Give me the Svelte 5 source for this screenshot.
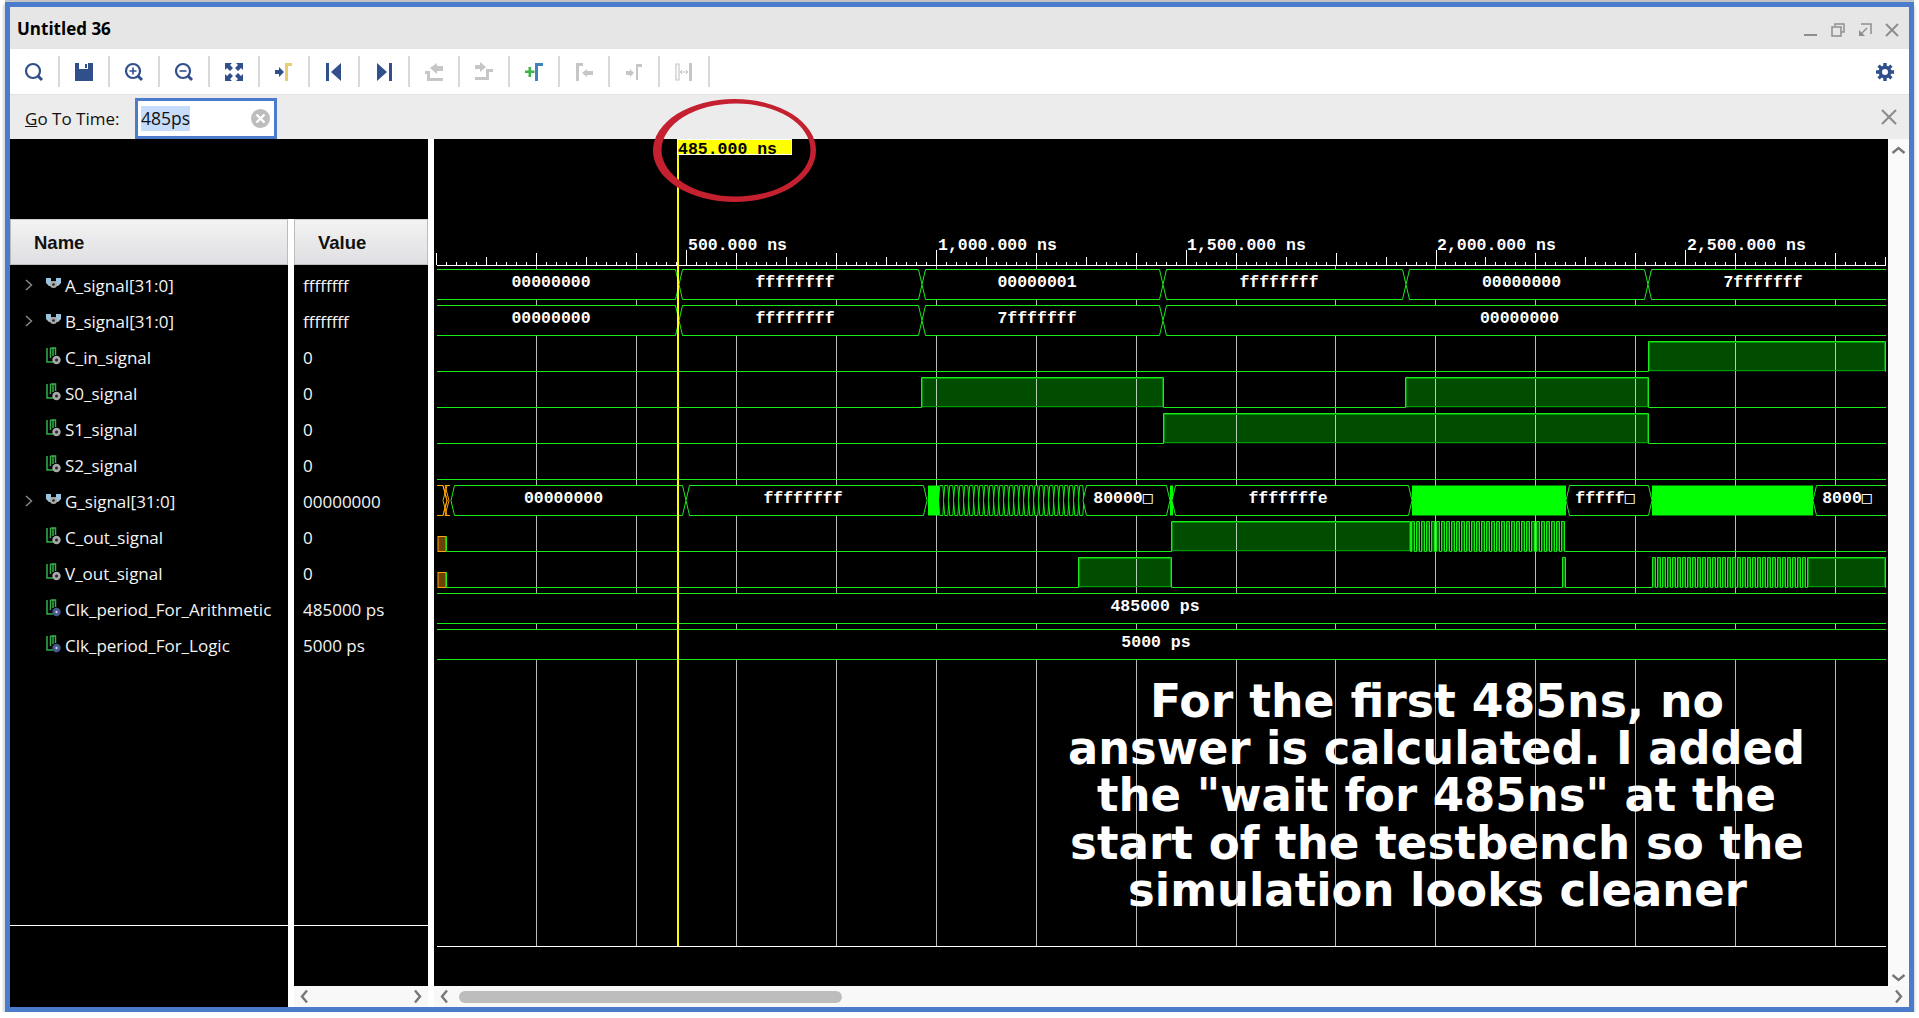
<script lang="ts">
  // === signal list ===
  const signals = [
    { name: 'A_signal[31:0]', value: 'ffffffff', kind: 'bus' },
    { name: 'B_signal[31:0]', value: 'ffffffff', kind: 'bus' },
    { name: 'C_in_signal', value: '0', kind: 'bit' },
    { name: 'S0_signal', value: '0', kind: 'bit' },
    { name: 'S1_signal', value: '0', kind: 'bit' },
    { name: 'S2_signal', value: '0', kind: 'bit' },
    { name: 'G_signal[31:0]', value: '00000000', kind: 'bus' },
    { name: 'C_out_signal', value: '0', kind: 'bit' },
    { name: 'V_out_signal', value: '0', kind: 'bit' },
    { name: 'Clk_period_For_Arithmetic', value: '485000 ps', kind: 'const' },
    { name: 'Clk_period_For_Logic', value: '5000 ps', kind: 'const' },
  ];

  const X0 = 437;
  const X1 = 1886;
  const GREEN = '#19ec19';
  const rowTop = (n: number) => 269.5 + 36 * n;
  const rowBase = (n: number) => 299.5 + 36 * n;

  // === ruler ===
  const ticks: { x: number; h: number }[] = [];
  for (let k = 0; k <= 145; k++) {
    let h = k % 10 === 0 ? 12 : k % 5 === 0 ? 8 : 3;
    if (k > 0 && k % 25 === 0) h = 15;
    ticks.push({ x: Math.floor(436.7 + k * 9.993) + 0.5, h });
  }
  const grid: number[] = [];
  for (let k = 0; k < 14; k++) grid.push(Math.floor(536.5 + k * 99.93) + 0.5);
  const labels = [
    { x: 688, t: '500.000 ns' },
    { x: 938, t: '1,000.000 ns' },
    { x: 1187, t: '1,500.000 ns' },
    { x: 1437, t: '2,000.000 ns' },
    { x: 1687, t: '2,500.000 ns' },
  ];

  // === buses ===
  type Seg = { a: number; b: number; text: string; tx: number };
  const T = [679, 922, 1163, 1406, 1648];
  const busA: Seg[] = [
    { a: X0 - 6, b: T[0], text: '00000000', tx: 551 },
    { a: T[0], b: T[1], text: 'ffffffff', tx: 795 },
    { a: T[1], b: T[2], text: '00000001', tx: 1037 },
    { a: T[2], b: T[3], text: 'ffffffff', tx: 1279 },
    { a: T[3], b: T[4], text: '00000000', tx: 1521.5 },
    { a: T[4], b: X1 + 6, text: '7fffffff', tx: 1763 },
  ];
  const busB: Seg[] = [
    { a: X0 - 6, b: T[0], text: '00000000', tx: 551 },
    { a: T[0], b: T[1], text: 'ffffffff', tx: 795 },
    { a: T[1], b: T[2], text: '7fffffff', tx: 1037 },
    { a: T[2], b: X1 + 6, text: '00000000', tx: 1519.5 },
  ];
  const busG: Seg[] = [
    { a: 451, b: 686, text: '00000000', tx: 563.5 },
    { a: 686, b: 927, text: 'ffffffff', tx: 803 },
    { a: 1083, b: 1170, text: '80000□', tx: 1123 },
    { a: 1172, b: 1412, text: 'fffffffe', tx: 1288 },
    { a: 1566, b: 1652, text: 'fffff□', tx: 1605 },
    { a: 1813, b: X1 + 6, text: '8000□', tx: 1847 },
  ];

  function hex(a: number, b: number, n: number, slope = 3.5): string {
    const t = rowTop(n);
    const d = rowBase(n);
    const m = (t + d) / 2;
    return `M${a} ${m}L${a + slope} ${t}L${b - slope} ${t}L${b} ${m}L${b - slope} ${d}L${a + slope} ${d}Z`;
  }

  // dense crossings between 939 and 1083 on G
  const dense: string[] = [];
  for (let x = 938.5; x < 1081; x += 5) dense.push(hex(x, x + 5.5, 6, 1.25));

  // === single bit rows ===
  function pulses(from: number, to: number, pitch = 5): [number, number][] {
    const out: [number, number][] = [];
    for (let x = from; x + 3 <= to; x += pitch) out.push([x, x + 3]);
    return out;
  }
  const bits: { n: number; start: number; highs: [number, number][] }[] = [
    { n: 2, start: X0, highs: [[1648, 1885]] },
    { n: 3, start: X0, highs: [[921, 1163], [1405, 1648]] },
    { n: 4, start: X0, highs: [[1163, 1648]] },
    { n: 5, start: X0, highs: [] },
    { n: 7, start: 447, highs: [[1171, 1410], ...pulses(1411, 1567)] },
    { n: 8, start: 447, highs: [[1078, 1171], [1562, 1565], ...pulses(1652, 1807), [1807, 1885]] },
  ];
  function bitLine(n: number, start: number, highs: [number, number][]): string {
    const t = rowTop(n);
    const d = rowBase(n);
    let p = `M${start} ${d}`;
    for (const [a, b] of highs) p += `L${a + 0.5} ${d}L${a + 0.5} ${t}L${b + 0.5} ${t}L${b + 0.5} ${d}`;
    return p + `L${X1} ${d}`;
  }

  const toolbar = ['search', 'save', 'zoomin', 'zoomout', 'fit', 'marker', 'first', 'last', 'rise', 'fall', 'add', 'prev', 'next', 'swap'];

  const note = [
    { t: 'For the first 485ns, no', x: 1150, w: 574, y: 717 },
    { t: 'answer is calculated. I added', x: 1068, w: 737, y: 764 },
    { t: 'the "wait for 485ns" at the', x: 1097, w: 679, y: 811 },
    { t: 'start of the testbench so the', x: 1070, w: 734, y: 859 },
    { t: 'simulation looks cleaner', x: 1128, w: 619, y: 906 },
  ];
</script>

{#snippet busText(x: number, y: number, text: string)}
  <text class="mono" {x} {y} text-anchor="middle" fill="#fff">{text.replace('□', '')}{#if text.includes('□')}<tspan class="box">□</tspan>{/if}</text>
{/snippet}

<div class="window">
  <header class="titlebar">
    <span class="title">Untitled 36</span>
    <div class="winbtns">
      <svg width="14" height="14" viewBox="0 0 14 14"><path d="M0 12h13" stroke="#8e8e8e" stroke-width="2" /></svg>
      <svg width="14" height="14" viewBox="0 0 14 14" fill="none" stroke="#8e8e8e" stroke-width="1.5"><path d="M4 3V1h9v8h-3M1 4h9v9H1z" /></svg>
      <svg width="14" height="14" viewBox="0 0 14 14" fill="none" stroke="#8e8e8e" stroke-width="1.5"><path d="M3 1h10v10" /><path d="M9 5L3 11" /><path d="M1 7v6h6z" fill="#8e8e8e" stroke="none" /></svg>
      <svg width="14" height="14" viewBox="0 0 14 14" stroke="#8e8e8e" stroke-width="2"><path d="M1 1l12 12M13 1L1 13" /></svg>
    </div>
  </header>

  <div class="toolbar">
    {#each toolbar as icon}
      <div class="tool">
        <svg width="20" height="20" viewBox="0 0 20 20">
          {#if icon === 'search'}
            <circle cx="9" cy="9" r="7" fill="none" stroke="#304f8b" stroke-width="2.2" /><path d="M14 14l4 4" stroke="#304f8b" stroke-width="3" />
          {:else if icon === 'save'}
            <path d="M1 1h18v18H1z" fill="#304f8b" /><path d="M5 1h9v6H5z" fill="#fff" /><path d="M11 2h2v4h-2z" fill="#304f8b" />
          {:else if icon === 'zoomin'}
            <circle cx="9" cy="9" r="7" fill="none" stroke="#304f8b" stroke-width="2.2" /><path d="M14 14l4 4" stroke="#304f8b" stroke-width="3" /><path d="M5.5 9h7M9 5.5v7" stroke="#304f8b" stroke-width="1.6" />
          {:else if icon === 'zoomout'}
            <circle cx="9" cy="9" r="7" fill="none" stroke="#304f8b" stroke-width="2.2" /><path d="M14 14l4 4" stroke="#304f8b" stroke-width="3" /><path d="M5.5 9h7" stroke="#304f8b" stroke-width="1.6" />
          {:else if icon === 'fit'}
            <g fill="#304f8b"><path d="M1 1h7L6 3l3 3-3 3-3-3-2 2zM19 1v7l-2-2-3 3-3-3 3-3-2-2zM19 19h-7l2-2-3-3 3-3 3 3 2-2zM1 19v-7l2 2 3-3 3 3-3 3 2 2z" /></g>
          {:else if icon === 'marker'}
            <path d="M11 19V1h7v3h-4v15z" fill="#e5cf6e" /><path d="M1 8h4V5l5 5-5 5v-3H1z" fill="#304f8b" />
          {:else if icon === 'first'}
            <path d="M2 1h3v18H2z" fill="#304f8b" /><path d="M17 1v18L7 10z" fill="#304f8b" />
          {:else if icon === 'last'}
            <path d="M15 1h3v18h-3z" fill="#304f8b" /><path d="M3 1v18l10-9z" fill="#304f8b" />
          {:else if icon === 'rise'}
            <path d="M1 9h5v7h13v3H3v-7H1z" fill="#c6c6c6" /><path d="M6 6l7-5v3h6v5h-6v3z" fill="#c6c6c6" />
          {:else if icon === 'fall'}
            <path d="M1 15h11V7h7v3h-4v8H1z" fill="#c6c6c6" /><path d="M1 3h5V0l6 5-6 5V7H1z" fill="#c6c6c6" />
          {:else if icon === 'add'}
            <path d="M11 19V1h8v3h-5v15z" fill="#3f85bd" /><path d="M1 8.500h3.500V5h2.600v3.500h3.400v2.600H7.100V15H4.500v-3.900H1z" fill="#3cb54a" />
          {:else if icon === 'prev'}
            <path d="M2 19V1h7v3H5v15z" fill="#c6c6c6" /><path d="M8 11l5-4v2h6v4h-6v2z" fill="#c6c6c6" />
          {:else if icon === 'next'}
            <path d="M12 18V2h6v3h-4v13z" fill="#c6c6c6" /><path d="M2 9h4V7l4 4-4 4v-2H2z" fill="#c6c6c6" />
          {:else}
            <path d="M2 2h3v16H2z" fill="none" stroke="#c6c6c6" stroke-width="1.2" /><path d="M15 1h3v18h-3z" fill="#c6c6c6" /><path d="M6 10h8M6 10l2-2M6 10l2 2M14 10l-2-2M14 10l-2 2" stroke="#c6c6c6" fill="none" />
          {/if}
        </svg>
      </div>
    {/each}
    <div class="gear">
      <svg width="18" height="18" viewBox="0 0 18 18">
        <g stroke="#304f8b" stroke-width="3.400"><path d="M9 0v18M0 9h18M2.600 2.600l12.800 12.800M15.400 2.600L2.600 15.400" /></g>
        <circle cx="9" cy="9" r="6.500" fill="#304f8b" /><circle cx="9" cy="9" r="3" fill="#fff" />
      </svg>
    </div>
  </div>

  <div class="gotobar">
    <label class="gotolabel" for="goto"><u>G</u>o To Time:</label>
    <div class="gotofield" id="goto">
      <span class="sel">485ps</span>
      <svg width="19" height="19" viewBox="0 0 19 19"><circle cx="9.500" cy="9.500" r="9.500" fill="#bdbdbd" /><path d="M5.500 5.500l8 8M13.500 5.500l-8 8" stroke="#fff" stroke-width="2.400" /></svg>
    </div>
    <svg class="gotoclose" width="16" height="16" viewBox="0 0 16 16"><path d="M1 1l14 14M15 1L1 15" stroke="#8e8e8e" stroke-width="2.200" /></svg>
  </div>

  <div class="main">
    <section class="signals">
      <div class="signals-top"></div>
      <div class="columns">
        <div class="col col-name">
          <div class="colhead">Name</div>
          <div class="colbody">
            {#each signals as s}
              <div class="row">
                <span class="chev">
                  {#if s.kind === 'bus'}
                    <svg width="8" height="12" viewBox="0 0 8 12"><path d="M1 1l5.500 5L1 11" fill="none" stroke="#8c8c8c" stroke-width="1.400" /></svg>
                  {/if}
                </span>
                <svg class="sigicon" width="17" height="18" viewBox="0 0 17 18">
                  {#if s.kind === 'bus'}
                    <path d="M1 3h5v3l2.500 1L11 6V3h5v5l-3 3H4L1 8z" fill="#9cc3dc" /><circle cx="8.500" cy="9.500" r="3.500" fill="#aaa" /><circle cx="8.500" cy="9.500" r="1.300" fill="#222" />
                  {:else}
                    <path d="M2 1v14h6M5.500 1v10M5.500 1h5v7M8 1v8" fill="none" stroke="#35b04a" stroke-width="1.500" />
                    {#if s.kind === 'const'}
                      <circle cx="11.500" cy="13" r="4.200" fill="#46598f" /><circle cx="11.500" cy="13" r="1.200" fill="#ccd" />
                    {:else}
                      <circle cx="11.500" cy="13" r="4.200" fill="#a8a8a8" /><circle cx="11.500" cy="13" r="1.500" fill="#222" />
                    {/if}
                  {/if}
                </svg>
                <span class="signame">{s.name}</span>
              </div>
            {/each}
          </div>
          <div class="colfoot"></div>
        </div>
        <div class="col col-value">
          <div class="colhead">Value</div>
          <div class="colbody">
            {#each signals as s}
              <div class="row"><span class="sigval">{s.value}</span></div>
            {/each}
          </div>
          <div class="colfoot"></div>
          <div class="hscroll">
            <svg width="9" height="15" viewBox="0 0 9 15"><path d="M7 1.500L2 7.500l5 6" fill="none" stroke="#777" stroke-width="2.400" /></svg>
            <svg width="9" height="15" viewBox="0 0 9 15"><path d="M2 1.500l5 6-5 6" fill="none" stroke="#777" stroke-width="2.400" /></svg>
          </div>
        </div>
      </div>
    </section>

    <section class="wave">
      <div class="wave-upper">
        <svg class="wavesvg" width="1454" height="847" viewBox="434 139 1454 847">
          <defs>
            <clipPath id="waveclip"><rect x={X0} y="260" width={X1 - X0} height="420" /></clipPath>
          </defs>
          <rect x="434" y="139" width="1454" height="847" fill="#000" />

          <!-- ruler -->
          <path d="M{X0} 265.500H{X1}" stroke="#fff" />
          {#each ticks as t}
            <path d="M{t.x} 265V{265 - t.h}" stroke="#fff" />
          {/each}
          {#each labels as l}
            <text class="mono" x={l.x} y="250" fill="#fff">{l.t}</text>
          {/each}

          <!-- high level fill sits under the grid -->
          {#each bits as b}
            {#each b.highs as h}
              <rect x={h[0]} y={rowTop(b.n)} width={h[1] - h[0]} height="30" fill={h[1] - h[0] > 20 ? '#004d00' : '#007a00'} />
            {/each}
          {/each}

          {#each grid as g}
            <path d="M{g} 265V946" stroke="#fff" stroke-opacity="0.72" />
          {/each}

          <!-- buses -->
          <g clip-path="url(#waveclip)">
            {#each [busA, busB] as bus, i}
              {#each bus as s}
                <path d={hex(s.a, s.b, i)} fill="#000" stroke={GREEN} />
                {@render busText(s.tx, rowTop(i) + 17, s.text)}
              {/each}
            {/each}

            {#each dense as d}
              <path d={d} fill="#000" stroke="#10f010" />
            {/each}
            <rect x="928" y={rowTop(6)} width="11" height="30" fill="#00ff00" />
            <rect x="1170" y={rowTop(6)} width="3" height="30" fill="#00ff00" />
            <rect x="1412" y={rowTop(6)} width="154" height="30" fill="#00ff00" />
            <rect x="1652" y={rowTop(6)} width="161" height="30" fill="#00ff00" />
            {#each busG as s}
              <path d={hex(s.a, s.b, 6)} fill="#000" stroke={GREEN} />
              {@render busText(s.tx, rowTop(6) + 17, s.text)}
            {/each}
          </g>
          <path d="M437 485.500h6l4 15-4 15h-6M450 485.500h-5l4 15-4 15h5" fill="none" stroke="#ffa500" />
          <path d="M443 485.500l4 15-4 15M447 485.500l-4 15 4 15" fill="none" stroke="#ffa500" />

          <!-- undefined start of the flag rows -->
          {#each [7, 8] as n}
            <rect x="438" y={rowBase(n) - 15} width="8" height="15" fill="#6a4100" stroke="#ffa500" />
            <path d="M446.500 {rowBase(n) - 15}V{rowBase(n)}" stroke={GREEN} />
          {/each}

          <!-- bit rows -->
          {#each bits as b}
            <path d={bitLine(b.n, b.start, b.highs)} fill="none" stroke={GREEN} />
            {#each b.highs as h}
              {#if h[1] - h[0] > 20}
                <rect x={h[0] + 1.500} y={rowTop(b.n) + 1} width={h[1] - h[0] - 2} height="28" fill="none" stroke="#009a0a" />
              {/if}
            {/each}
          {/each}

          <!-- constant rows -->
          {#each [{ n: 9, t: '485000 ps', x: 1155 }, { n: 10, t: '5000 ps', x: 1156 }] as c}
            <rect x={X0} y={rowTop(c.n)} width={X1 - X0} height="30" fill="#000" />
            <path d="M{X0} {rowTop(c.n)}H{X1}M{X0} {rowBase(c.n)}H{X1}" stroke={GREEN} />
            <text class="mono" x={c.x} y={rowTop(c.n) + 17} text-anchor="middle" fill="#fff">{c.t}</text>
          {/each}

          <path d="M437 946.500H{X1}" stroke="#fff" />

          <!-- annotation pasted onto the waveform -->
          {#each note as l}
            <text class="note" x={l.x} y={l.y} textLength={l.w} lengthAdjust="spacingAndGlyphs" fill="#fff">{l.t}</text>
          {/each}

          <!-- cursor -->
          <rect x="677" y="139" width="2" height="807" fill="#ffff00" />
          <rect x="677.500" y="139.500" width="114" height="15" fill="#ffff00" stroke="#fff" />
          <text class="mono" x="678" y="153.500" fill="#000">485.000 ns</text>
        </svg>
        <div class="vscroll">
          <svg width="15" height="9" viewBox="0 0 15 9"><path d="M1.500 7l6-5 6 5" fill="none" stroke="#777" stroke-width="2.400" /></svg>
          <svg width="15" height="9" viewBox="0 0 15 9"><path d="M1.500 2l6 5 6-5" fill="none" stroke="#777" stroke-width="2.400" /></svg>
        </div>
      </div>
      <div class="hscroll wide">
        <svg width="9" height="15" viewBox="0 0 9 15"><path d="M7 1.500L2 7.500l5 6" fill="none" stroke="#777" stroke-width="2.400" /></svg>
        <div class="track"><div class="thumb"></div></div>
        <svg width="9" height="15" viewBox="0 0 9 15"><path d="M2 1.500l5 6-5 6" fill="none" stroke="#777" stroke-width="2.400" /></svg>
      </div>
    </section>
  </div>

  <!-- hand drawn circle round the cursor label, lies over the bars -->
  <svg class="circle" width="180" height="116" viewBox="0 0 180 116">
    <path
      fill-rule="evenodd"
      fill="#c4202f"
      d="M5 57.500a81.500 51.500 0 1 0 163 0a81.500 51.500 0 1 0 -163 0ZM13.500 57a74.500 46.500 0 1 1 149 0a74.500 46.500 0 1 1 -149 0Z"
    />
  </svg>
</div>

<style>
  :global(body) {
    margin: 0;
    background: #fff;
    overflow: hidden;
  }
  .window {
    position: relative;
    box-sizing: border-box;
    width: 1909px;
    height: 1010px;
    margin: 2px 0 0 5px;
    border: 5px solid #4a7ccb;
    display: flex;
    flex-direction: column;
    box-shadow: 0 -2px 0 #c4c4c4, -2px 2px 2px #ddd, 0 4px 3px #aaa;
    font-family: "Open Sans", "Noto Sans", sans-serif;
  }

  .titlebar {
    height: 42px;
    flex: none;
    background: #e6e6e6;
    display: flex;
    align-items: center;
    justify-content: space-between;
    padding: 0 10px 0 7px;
  }
  .title {
    font-size: 17px;
    font-weight: 700;
    color: #000;
  }
  .winbtns {
    display: flex;
    gap: 13px;
    margin-top: 4px;
  }

  .toolbar {
    height: 46px;
    flex: none;
    background: #fff;
    display: flex;
    align-items: center;
    border-bottom: 1px solid #e2e2e2;
    box-sizing: border-box;
  }
  .tool {
    width: 50px;
    height: 31px;
    box-sizing: border-box;
    display: flex;
    align-items: center;
    justify-content: center;
    border-right: 2px solid #d9d9d9;
  }
  .gear {
    margin-left: auto;
    margin-right: 15px;
    display: flex;
  }

  .gotobar {
    height: 44px;
    flex: none;
    background: #ececec;
    display: flex;
    align-items: center;
    padding-left: 15px;
    padding-right: 12px;
  }
  .gotolabel {
    font-size: 17px;
    color: #111;
    width: 110px;
    margin-top: 2px;
  }
  .gotofield {
    box-sizing: border-box;
    width: 142px;
    height: 41px;
    margin-top: 3px;
    background: #fff;
    border: 3px solid #4a7ccb;
    display: flex;
    align-items: center;
    justify-content: space-between;
    padding: 0 4px 0 3px;
  }
  .sel {
    background: #c6dcfb;
    font-size: 17.500px;
    line-height: 25px;
    color: #111;
  }
  .gotoclose {
    margin-left: auto;
  }

  .main {
    flex: 1;
    min-height: 0;
    display: flex;
    background: #fff;
  }
  .signals {
    width: 418px;
    flex: none;
    display: flex;
    flex-direction: column;
    margin-right: 6px;
  }
  .signals-top {
    height: 80px;
    flex: none;
    background: #000;
  }
  .columns {
    flex: 1;
    min-height: 0;
    display: flex;
    gap: 6px;
  }
  .col {
    display: flex;
    flex-direction: column;
    background: #000;
  }
  .col-name {
    width: 278px;
  }
  .col-value {
    width: 134px;
  }
  .colhead {
    box-sizing: border-box;
    height: 46px;
    flex: none;
    display: flex;
    align-items: center;
    padding: 2px 0 0 23px;
    background: linear-gradient(#f3f3f3, #dfdfe3);
    border: 1px solid #bcbcbc;
    border-top-color: #cfcfcf;
    font-family: "Liberation Sans", sans-serif;
    font-weight: 700;
    font-size: 18.500px;
    color: #111;
  }
  .colbody {
    height: 661px;
    flex: none;
    padding-top: 2px;
    box-sizing: border-box;
    border-bottom: 1px solid #fff;
  }
  .colfoot {
    flex: 1;
  }
  .row {
    height: 36px;
    display: flex;
    align-items: center;
    color: #f4f4f4;
    font-size: 17px;
  }
  .chev {
    width: 35px;
    flex: none;
    display: flex;
    justify-content: flex-end;
    padding-right: 12px;
    box-sizing: border-box;
  }
  .sigicon {
    flex: none;
    margin-right: 3px;
    margin-top: -2px;
  }
  .signame {
    white-space: nowrap;
  }
  .sigval {
    padding-left: 9px;
  }

  .wave {
    flex: 1;
    min-width: 0;
    display: flex;
    flex-direction: column;
  }
  .wave-upper {
    height: 847px;
    flex: none;
    display: flex;
  }
  .wavesvg {
    display: block;
    flex: none;
  }
  .mono {
    font-family: "Liberation Mono", monospace;
    font-weight: 700;
    font-size: 16.500px;
  }
  .box {
    font-family: "DejaVu Sans Mono", monospace;
    font-weight: 400;
    font-size: 16.500px;
  }
  .note {
    font-family: "DejaVu Sans", sans-serif;
    font-weight: 700;
    font-size: 46px;
  }
  .vscroll {
    flex: 1;
    background: #fafafa;
    display: flex;
    flex-direction: column;
    align-items: center;
    justify-content: space-between;
    padding: 7px 0 4px;
  }
  .hscroll {
    height: 21px;
    flex: none;
    background: #f8f8f8;
    display: flex;
    align-items: center;
    justify-content: space-between;
    padding: 0 6px;
  }
  .hscroll.wide {
    gap: 10px;
  }
  .track {
    flex: 1;
    display: flex;
  }
  .thumb {
    width: 383px;
    height: 12px;
    border-radius: 6px;
    background: #bdbdbd;
  }
  .circle {
    position: absolute;
    left: 638px;
    top: 86px;
  }
</style>
